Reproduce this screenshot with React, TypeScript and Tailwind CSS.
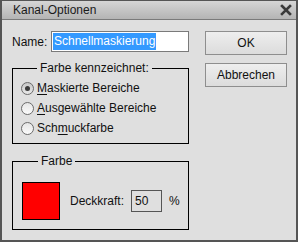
import React from 'react';

const font = { fontFamily: '"Liberation Sans", Arial, sans-serif' };

function Radio({ checked, label, accel }: { checked?: boolean; label: string; accel: number }) {
  return (
    <div className="h-[20px] flex items-center">
      <div
        className={`w-[13px] h-[13px] rounded-full border border-[#6b6b6b] flex items-center justify-center ${
          checked ? 'bg-gradient-to-b from-[#c8c8c8] to-[#e8e8e8]' : 'bg-gradient-to-b from-[#e6e6e6] to-[#fafafa]'
        }`}
      >
        {checked && <div className="w-[5px] h-[5px] rounded-full bg-[#3a3a3a]" />}
      </div>
      <span className="ml-[3px]">
        {label.slice(0, accel)}
        <span className="underline underline-offset-2">{label[accel]}</span>
        {label.slice(accel + 1)}
      </span>
    </div>
  );
}

export default function App() {
  return (
    <div
      style={font}
      className="w-[298px] h-[242px] bg-[#dfdfdf] border-x-2 border-b-2 border-t border-[#555555] flex flex-col text-[12px] text-[#111]"
    >
      {/* Title bar */}
      <div className="h-[18px] shrink-0 flex items-center justify-between pl-[11px] pr-[4px] bg-gradient-to-b from-[#d6d6d6] to-[#b4b4b4]">
        <span className="text-[12px] text-[#1a1a1a]">Kanal-Optionen</span>
        <svg width="12" height="12" viewBox="0 0 12 12">
          <path d="M2 2 L10 10 M10 2 L2 10" stroke="#3a3a3a" strokeWidth="2.6" strokeLinecap="square" />
        </svg>
      </div>
      <div className="h-px bg-[#7a7a7a] shrink-0" />

      {/* Body */}
      <div className="flex pl-[10px] pt-[11px]">
        <div className="w-[177px]">
          <div className="h-[21px] flex items-center">
            <span className="w-[39px]">Name:</span>
            <div className="w-[138px] h-[21px] border border-[#7a7a7a] bg-white flex items-center px-[1px]">
              <span className="bg-[#3399ff] text-white h-[17px] leading-[17px] px-[1px]">Schnellmaskierung</span>
            </div>
          </div>

          <fieldset className="mt-[9px] border border-black pl-[8px] pt-[3px] pb-[5px]">
            <legend className="ml-[16px] px-[3px] leading-[14px]">Farbe kennzeichnet:</legend>
            <Radio checked label="Maskierte Bereiche" accel={0} />
            <Radio label="Ausgewählte Bereiche" accel={0} />
            <Radio label="Schmuckfarbe" accel={3} />
          </fieldset>

          <fieldset className="mt-[10px] border border-black pl-[9px] pt-[14px] pb-[9px]">
            <legend className="ml-[16px] px-[3px] leading-[14px]">Farbe</legend>
            <div className="flex items-center">
              <div className="w-[38px] h-[38px] bg-[#ff0000] border border-black" />
              <span className="ml-[10px] w-[61px]">Deckkraft:</span>
              <div className="w-[31px] h-[22px] border border-[#555555] flex items-center pl-[3px]">50</div>
              <span className="ml-[7px]">%</span>
            </div>
          </fieldset>
        </div>

        <div className="ml-[16px] w-[82px] flex flex-col gap-[8px]">
          <button className="h-[24px] border border-[#8e8e8e] bg-gradient-to-b from-[#eeeeee] to-[#dcdcdc] text-[12px]">OK</button>
          <button className="h-[24px] border border-[#8e8e8e] bg-gradient-to-b from-[#eeeeee] to-[#dcdcdc] text-[12px]">Abbrechen</button>
        </div>
      </div>
    </div>
  );
}
